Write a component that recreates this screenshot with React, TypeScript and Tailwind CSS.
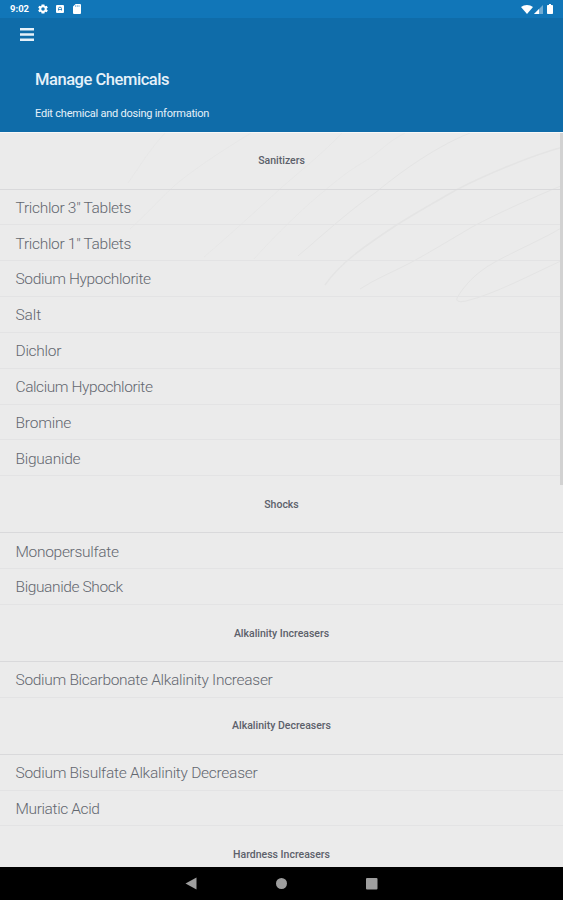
interface Chemical {
  name: string
  // per-name letter spacing, keeps the list text condensed
  tracking: string
}

interface ChemicalGroup {
  title: string
  items: Chemical[]
}

const GROUPS: ChemicalGroup[] = [
  {
    title: 'Sanitizers',
    items: [
      { name: 'Trichlor 3" Tablets', tracking: 'tracking-[-0.3px]' },
      { name: 'Trichlor 1" Tablets', tracking: 'tracking-[-0.3px]' },
      { name: 'Sodium Hypochlorite', tracking: 'tracking-[-0.36px]' },
      { name: 'Salt', tracking: 'tracking-[-0.1px]' },
      { name: 'Dichlor', tracking: 'tracking-[-0.28px]' },
      { name: 'Calcium Hypochlorite', tracking: 'tracking-[-0.42px]' },
      { name: 'Bromine', tracking: 'tracking-[-0.2px]' },
      { name: 'Biguanide', tracking: 'tracking-[-0.25px]' },
    ],
  },
  {
    title: 'Shocks',
    items: [
      { name: 'Monopersulfate', tracking: 'tracking-[-0.3px]' },
      { name: 'Biguanide Shock', tracking: 'tracking-[-0.38px]' },
    ],
  },
  {
    title: 'Alkalinity Increasers',
    items: [{ name: 'Sodium Bicarbonate Alkalinity Increaser', tracking: 'tracking-[-0.3px]' }],
  },
  {
    title: 'Alkalinity Decreasers',
    items: [
      { name: 'Sodium Bisulfate Alkalinity Decreaser', tracking: 'tracking-[-0.27px]' },
      { name: 'Muriatic Acid', tracking: 'tracking-[-0.38px]' },
    ],
  },
  { title: 'Hardness Increasers', items: [] },
]

export default function App() {
  return (
    <div className="flex h-[900px] w-[563px] flex-col overflow-hidden bg-[#ebebeb] font-['Roboto',sans-serif]">
      <StatusBar />
      <Header />
      <main className="relative min-h-0 flex-1 overflow-hidden border-t border-[#f8f8f8]">
        <Waves />
        <div className="relative -mt-[0.5px]">
          {GROUPS.map((group) => (
            <Group key={group.title} group={group} />
          ))}
        </div>
        <div className="absolute top-0 right-0 h-[352px] w-[3px] bg-[#d2d2d2]" />
      </main>
      <NavBar />
    </div>
  )
}

function StatusBar() {
  return (
    <div className="flex h-[18px] shrink-0 items-center bg-[#1176b8] px-[10px] text-white">
      <span className="w-[20px] text-[9.5px] leading-none font-bold whitespace-nowrap">9:02</span>
      <svg className="ml-[7px] h-[12px] w-[12px]" viewBox="0 0 24 24" fill="currentColor">
        <path d="M19.4 13c.1-.6.1-1.4 0-2l2.2-1.6-2.1-3.7-2.5 1a8 8 0 0 0-1.7-1L14.9 3H9.1l-.4 2.7a8 8 0 0 0-1.7 1l-2.5-1-2.1 3.7L4.6 11a8 8 0 0 0 0 2l-2.2 1.6 2.1 3.7 2.5-1a8 8 0 0 0 1.7 1l.4 2.7h5.8l.4-2.7a8 8 0 0 0 1.7-1l2.5 1 2.1-3.7zM12 15.5a3.5 3.5 0 1 1 0-7 3.5 3.5 0 0 1 0 7z" />
      </svg>
      <svg className="ml-[7px] h-[8px] w-[8px]" viewBox="0 0 8 8">
        <rect width="8" height="8" rx="1" fill="currentColor" />
        <path d="M2.5 5.5V3.5a1.5 1.3 0 0 1 3 0v2M2.5 4.5h3" fill="none" stroke="#1176b8" strokeWidth="0.8" />
      </svg>
      <svg className="ml-[9px] h-[10px] w-[8px]" viewBox="0 0 8 10">
        <path d="M2.6 0H7a1 1 0 0 1 1 1v8a1 1 0 0 1-1 1H1a1 1 0 0 1-1-1V2.6z" fill="currentColor" />
        <path d="M2.6 1.3v1.5M4.3 1.3v1.5M6 1.3v1.5" stroke="#1176b8" strokeWidth="0.6" />
      </svg>
      <svg className="ml-auto h-[9px] w-[12px]" viewBox="0 0 12 9" fill="currentColor">
        <path d="M0 2.1C3.4-.6 8.6-.6 12 2.1L6 9z" />
      </svg>
      <svg className="ml-[1px] h-[9px] w-[9px]" viewBox="0 0 9 9" fill="currentColor">
        <path d="M9 0v9H0z" opacity="0.4" />
        <path d="M5 4v5H0z" />
      </svg>
      <svg className="ml-[4px] h-[10px] w-[6px]" viewBox="0 0 6 10" fill="currentColor">
        <path d="M2 0h2v1h1.2q.8 0 .8.8v7.4q0 .8-.8.8H.8Q0 10 0 9.2V1.8Q0 1 .8 1H2z" />
      </svg>
    </div>
  )
}

function Header() {
  return (
    <header className="flex h-[114px] shrink-0 flex-col bg-[#0f6ca9] text-[#e6f1f9]">
      <div className="flex h-[33px] items-start pt-[10px] pl-[20px]">
        <svg className="h-[13px] w-[14px]" viewBox="0 0 14 13" fill="currentColor">
          <path d="M0 0h14v2.5H0zM0 5.2h14v2.5H0zM0 10.4h14v2.5H0z" />
        </svg>
      </div>
      <h1 className="mt-[18px] pl-[35px] text-[16.5px] leading-[22px] font-medium tracking-[-0.45px]">
        Manage Chemicals
      </h1>
      <p className="mt-[15px] pl-[35px] text-[11px] leading-[16px] tracking-[-0.22px]">
        Edit chemical and dosing information
      </p>
    </header>
  )
}

function Group({ group }: { group: ChemicalGroup }) {
  return (
    <section>
      <h2 className="flex h-[57px] items-center justify-center border-b border-[#d9d9db] pt-px text-[10.5px] font-medium text-[#5c606a]">
        {group.title}
      </h2>
      {group.items.map((item) => (
        <div
          key={item.name}
          className="flex h-[35.85px] items-center border-b border-[#e3e3e4] pt-[3px] pl-[15.5px] text-[15.5px] font-light whitespace-nowrap text-[#63676f]"
        >
          <span className={item.tracking}>{item.name}</span>
        </div>
      ))}
    </section>
  )
}

function Waves() {
  return (
    <svg className="absolute top-0 left-0 h-[200px] w-[563px]" viewBox="0 132 563 200" fill="none" stroke="#e4e4e4">
      <path d="M563 146C530 155 485 174 456 189C430 204 412 214 395 225C365 245 340 262 325 284" strokeWidth="1.5" />
      <path d="M563 184C530 198 500 211 472 226C445 242 425 254 410 262C395 270 375 278 360 288" />
      <path d="M563 226C545 237 515 250 495 261C475 272 464 285 457 297C456 301 460 301 466 300C495 293 530 274 563 259" />
      <path d="M470 132C430 148 392 178 375 192C350 209 325 232 298 255" />
      <path d="M405 132C385 142 380 152 362 162C345 172 330 185 310 202C290 220 270 240 254 258" strokeOpacity="0.6" />
      <path d="M342 132C320 155 300 170 280 188C258 208 232 232 204 256" strokeOpacity="0.6" />
      <path d="M251 132C225 148 203 162 180 180C165 192 150 210 130 228" strokeOpacity="0.6" />
      <path d="M165 132C150 148 140 165 128 182" strokeOpacity="0.5" />
    </svg>
  )
}

function NavBar() {
  return (
    <nav className="h-[33px] shrink-0 bg-black">
      <svg className="h-[33px] w-[563px]" viewBox="0 0 563 33" fill="#9e9e9e">
        <path d="M185.5 16.5 196.5 10.5V22.5z" />
        <circle cx="281.5" cy="16.5" r="5.5" />
        <rect x="366" y="11" width="11.5" height="11.5" rx="1" />
      </svg>
    </nav>
  )
}
